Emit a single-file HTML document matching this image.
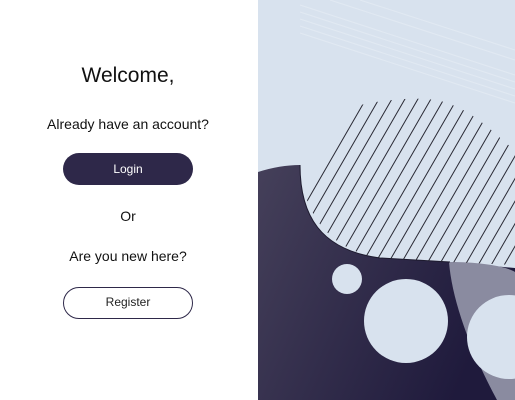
<!DOCTYPE html>
<html><head><style>
html,body{margin:0;padding:0;width:515px;height:400px;overflow:hidden;background:#fff;font-family:"Liberation Sans",sans-serif;color:#111}
.l{position:absolute;left:0;top:0;width:258px;height:400px}
.t{position:absolute;left:0;width:256px;text-align:center;white-space:nowrap}
.btn{position:absolute;left:63px;width:130px;height:32px;border-radius:16px;box-sizing:border-box;text-align:center;line-height:32px;font-size:12px}
svg{position:absolute;left:258px;top:0}
</style></head><body>
<div class="l">
<div class="t" style="top:64px;font-size:21px">Welcome,</div>
<div class="t" style="top:116px;font-size:14px">Already have an account?</div>
<div class="btn" style="top:153px;background:#2e2849;color:#fff">Login</div>
<div class="t" style="top:208px;font-size:14px">Or</div>
<div class="t" style="top:248px;font-size:14px">Are you new here?</div>
<div class="btn" style="top:287px;border:1.5px solid #2e2849;color:#222;line-height:29px">Register</div>
</div>
<svg width="257" height="400" viewBox="258 0 257 400">
<defs>
<linearGradient id="dk" x1="0" y1="0" x2="1" y2="0.4">
<stop offset="0" stop-color="#45405a"/><stop offset="1" stop-color="#1f1a3c"/></linearGradient>
<clipPath id="cl"><path d="M300,170 C300,135 330,110 370,103 C400,98 430,96 450,104 C480,115 500,140 515,150 L515,265 L450,262 L380,258 C330,250 305,215 300,170 Z"/></clipPath>
</defs>
<rect x="258" y="0" width="257" height="400" fill="#d8e2ee"/>
<g stroke="#e6edf5" stroke-width="1" opacity="0.7">
<path d="M300,5 L515,75 M300,12 L515,82 M300,19 L515,89 M300,26 L515,96 M300,33 L515,103 M330,0 L515,60 M360,0 L515,50"/>
</g>
<path d="M258,172 Q280,165 300,165 C300,215 320,250 380,258 L450,262 L515,268 L515,400 L258,400 Z" fill="url(#dk)"/>
<path d="M449,262 C480,262 505,266 515,272 L515,400 L497,400 C470,350 452,300 449,262 Z" fill="#8a8ba0"/>
<path d="M300,165 C300,215 320,250 380,258 L450,262" fill="none" stroke="#1d1a2e" stroke-width="1"/>
<g clip-path="url(#cl)" stroke="#2a2a35" stroke-width="1">
<path d="M250,300 L400,40 M263,300 L413,40 M276,300 L426,40 M289,300 L439,40 M302,300 L452,40 M315,300 L465,40 M328,300 L478,40 M341,300 L491,40 M354,300 L504,40 M367,300 L517,40 M380,300 L530,40 M393,300 L543,40 M406,300 L556,40 M419,300 L569,40 M432,300 L582,40 M445,300 L595,40 M458,300 L608,40 M471,300 L621,40 M484,300 L634,40"/>
</g>
<circle cx="347" cy="279" r="15" fill="#d8e2ee"/>
<circle cx="406" cy="321" r="42" fill="#d8e2ee"/>
<circle cx="509" cy="337" r="42" fill="#d8e2ee"/>
</svg>
</body></html>
